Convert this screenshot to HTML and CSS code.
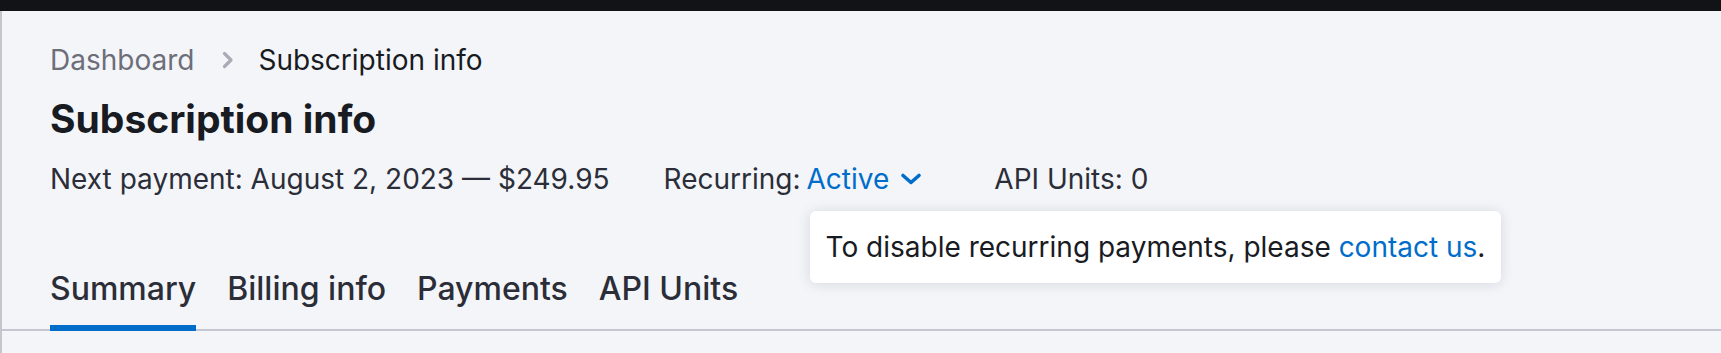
FILE: index.html
```html
<!DOCTYPE html>
<html lang="en">
<head>
<meta charset="utf-8">
<title>Subscription info</title>
<link rel="stylesheet" href="styles.css">
</head>
<body>
<div class="topbar"></div>
<main class="page">
  <nav class="breadcrumbs">
    <a class="crumb crumb-link" href="#">Dashboard</a>
    <svg class="crumb-sep" width="16" height="20" viewBox="0 0 16 20" aria-hidden="true"><path d="M4.5 3.5 L11 10 L4.5 16.5" fill="none" stroke="#a9abb6" stroke-width="3.2" stroke-linecap="round" stroke-linejoin="round"/></svg>
    <span class="crumb crumb-current">Subscription info</span>
  </nav>
  <h1 class="title">Subscription info</h1>
  <div class="meta">
    <span class="meta-item first">Next payment: August 2, 2023 — $249.95</span>
    <span class="meta-item recurring"><span class="label">Recurring:</span><span class="trigger"><a class="link" href="#">Active</a><svg class="chevron" width="24" height="14" viewBox="0 0 24 14" aria-hidden="true"><path d="M4 3.5 L12 10.5 L20 3.5" fill="none" stroke="#006dca" stroke-width="3.6" stroke-linecap="round" stroke-linejoin="round"/></svg><span class="tooltip">To disable recurring payments, please <a class="link" href="#">contact us</a>.</span></span></span>
    <span class="meta-item">API Units: 0</span>
  </div>
  <div class="tabs">
    <a class="tab tab-active" href="#">Summary</a>
    <a class="tab" href="#">Billing info</a>
    <a class="tab" href="#">Payments</a>
    <a class="tab" href="#">API Units</a>
  </div>
</main>
</body>
</html>
```

FILE: styles.css
```css
html, body {
  margin: 0;
  padding: 0;
  background: #f4f5f9;
  font-family: "Inter", "Noto Sans", "Liberation Sans", sans-serif;
  color: #191b23;
}

.topbar {
  height: 11px;
  background: #121317;
}

.page {
  border-left: 2px solid #c5c6ca;
  min-height: 342px;
  box-sizing: border-box;
  padding-top: 29px;
}

.breadcrumbs {
  display: flex;
  align-items: center;
  padding-left: 48px;
  font-size: 28px;
  line-height: 40px;
  height: 40px;
}

.crumb {
  text-decoration: none;
}

.crumb-link {
  color: #6c6e79;
}

.crumb-current {
  color: #191b23;
}

.crumb-sep {
  margin: 0 22px 0 26px;
}

.title {
  margin: 15px 0 0;
  padding-left: 48px;
  font-size: 39px;
  line-height: 48px;
  font-weight: 700;
  color: #191b23;
}

.meta {
  display: flex;
  align-items: center;
  margin-top: 16px;
  padding-left: 48px;
  font-size: 28px;
  line-height: 40px;
  height: 40px;
  color: #2b2e38;
}

.meta-item {
  display: flex;
  align-items: center;
  white-space: nowrap;
}

.first {
  margin-right: 54px;
}

.label {
  margin-right: 6px;
}

.recurring {
  margin-right: 75px;
}

.trigger {
  position: relative;
  display: flex;
  align-items: center;
}

.link {
  color: #006dca;
  text-decoration: none;
}

.chevron {
  margin-left: 10px;
  margin-right: -4px;
}

.tooltip {
  position: absolute;
  left: 3px;
  top: 52px;
  z-index: 2;
  white-space: nowrap;
  background: #ffffff;
  color: #191b23;
  border-radius: 6px;
  padding: 16px 16px;
  line-height: 40px;
  box-shadow: 0 1px 14px rgba(25, 27, 35, 0.13);
}

.tabs {
  display: flex;
  gap: 31px;
  margin-top: 70px;
  padding-left: 48px;
  border-bottom: 2px solid #c4c7cf;
}

.tab {
  display: block;
  font-size: 32px;
  line-height: 40px;
  font-weight: 500;
  color: #2b2e38;
  text-decoration: none;
  padding-bottom: 16px;
  border-bottom: 6px solid transparent;
  margin-bottom: -2px;
}

.tab-active {
  border-bottom-color: #006dca;
}
```
